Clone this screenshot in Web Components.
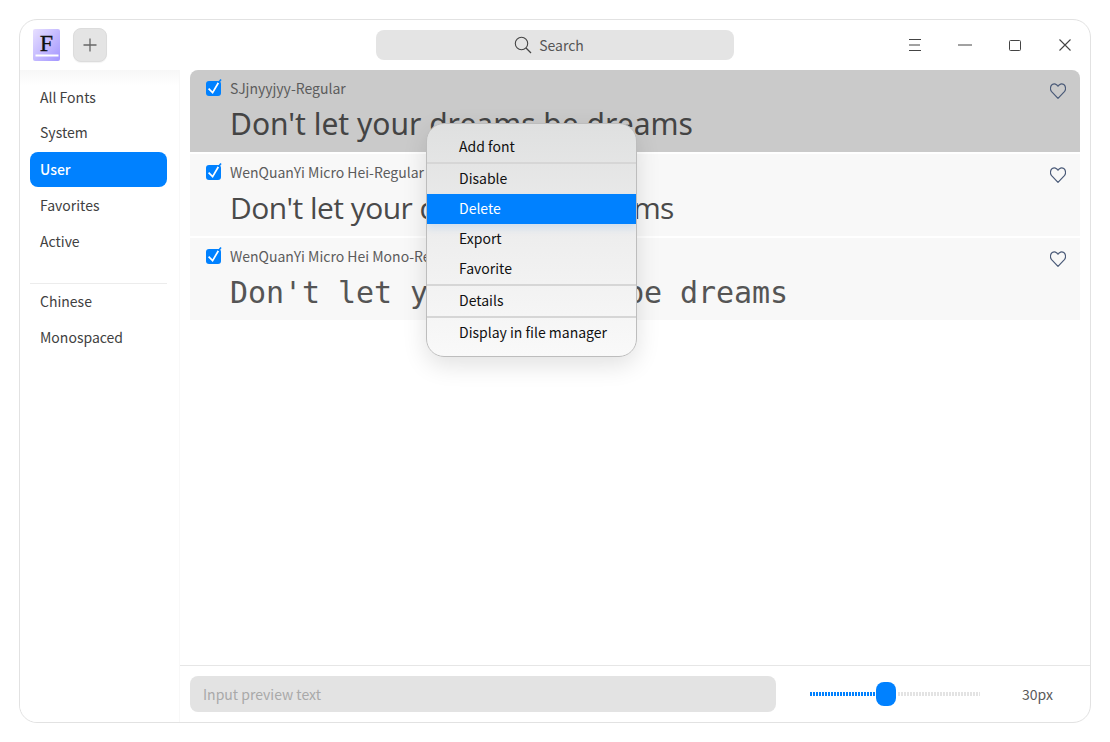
<!DOCTYPE html>
<html lang="en">
<head>
<meta charset="utf-8">
<title>Font Manager</title>
<style>
  html, body { margin: 0; height: 100%; background: #fff; }
  body { font-family: "Noto Sans CJK SC", "Noto Sans", sans-serif; font-size: 14px; }
</style>
</head>
<body>
<font-app>
  <title-bar slot="top"></title-bar>
  <side-nav slot="side">
    <nav-item>All Fonts</nav-item>
    <nav-item>System</nav-item>
    <nav-item active>User</nav-item>
    <nav-item>Favorites</nav-item>
    <nav-item>Active</nav-item>
    <nav-rule></nav-rule>
    <nav-item>Chinese</nav-item>
    <nav-item>Monospaced</nav-item>
  </side-nav>
  <font-list slot="main">
    <font-row name="SJjnyyjyy-Regular" selected face="noto">Don't let your dreams be dreams</font-row>
    <font-row name="WenQuanYi Micro Hei-Regular" face="open">Don't let your dreams be dreams</font-row>
    <font-row name="WenQuanYi Micro Hei Mono-Regular" face="mono">Don't let your dreams be dreams</font-row>
  </font-list>
  <preview-bar slot="bottom"></preview-bar>
  <context-menu slot="overlay">
    <menu-item>Add font</menu-item>
    <menu-rule></menu-rule>
    <menu-item>Disable</menu-item>
    <menu-item active>Delete</menu-item>
    <menu-item>Export</menu-item>
    <menu-item>Favorite</menu-item>
    <menu-rule></menu-rule>
    <menu-item>Details</menu-item>
    <menu-rule></menu-rule>
    <menu-item>Display in file manager</menu-item>
  </context-menu>
</font-app>

<script>
class FontApp extends HTMLElement{
    constructor(){
        super();
        this.attachShadow({ mode : "open"});
        this.shadowRoot.innerHTML = `
        <style>
            :host{
                display: block;
                box-sizing: border-box;
                height: 742px;
                padding: 19px;
            }
            .window{
                position: relative;
                box-sizing: border-box;
                height: 704px;
                border: 1px solid #e2e2e2;
                border-radius: 18px;
                background: #fff;
                display: grid;
                grid-template-columns: 160px 1fr;
                grid-template-rows: 50px 1fr 57px;
                grid-template-areas: "top top" "side main" "side bottom";
            }
            .top{ grid-area: top; }
            .side{ grid-area: side; }
            .main{ grid-area: main; }
            .bottom{ grid-area: bottom; }
            .cell{ display: block; min-width: 0; min-height: 0; }
        </style>
        <div class="window">
            <div class="cell top"><slot name="top"></slot></div>
            <div class="cell side"><slot name="side"></slot></div>
            <div class="cell main"><slot name="main"></slot></div>
            <div class="cell bottom"><slot name="bottom"></slot></div>
            <slot name="overlay"></slot>
        </div>
        `
    }
}

class TitleBar extends HTMLElement{
    constructor(){
        super();
        this.attachShadow({ mode : "open"});
        this.shadowRoot.innerHTML = `
        <style>
            :host{
                display: grid;
                grid-template-columns: 1fr 358px 1fr;
                align-items: center;
                height: 50px;
                color: #414141;
            }
            .left{ display: flex; align-items: center; padding-left: 13px; gap: 13px; }
            .logo{ width: 27px; height: 32px; display: block; }
            .add{
                box-sizing: border-box;
                width: 34px;
                height: 34px;
                border-radius: 8px;
                background: #e4e4e4;
                border: 1px solid #dcdcdc;
                box-shadow: 0 1px 1px #0000000d;
                display: flex;
                align-items: center;
                justify-content: center;
            }
            .search{
                box-sizing: border-box;
                height: 30px;
                padding-right: 12px;
                border-radius: 8px;
                background: #e4e4e4;
                display: flex;
                align-items: center;
                justify-content: center;
                gap: 7px;
                color: #555;
                font-size: 14px;
            }
            .controls{
                display: flex;
                justify-content: flex-end;
                align-items: center;
            }
            .ctl{ width: 50px; height: 50px; display: flex; align-items: center; justify-content: center; }
            svg{ display: block; }
        </style>
        <div class="left">
            <svg class="logo" viewBox="0 0 27 32">
                <defs>
                    <linearGradient id="bk" x1="0" y1="0" x2="1" y2="1">
                        <stop offset="0" stop-color="#e8e0ff"/>
                        <stop offset="1" stop-color="#a396ff"/>
                    </linearGradient>
                </defs>
                <path d="M2 0h23a2 2 0 0 1 2 2v28a2 2 0 0 1-2 2H2a2 2 0 0 1-2-2V2a2 2 0 0 1 2-2z" fill="url(#bk)"/>
                <path d="M2.5 25.5h23v2H2.5z" fill="#fff"/>
                <text x="13.5" y="22" text-anchor="middle" font-family="Liberation Serif" font-size="24" stroke="#111" stroke-width=".3" fill="#111">F</text>
            </svg>
            <div class="add">
                <svg width="14" height="14" viewBox="0 0 14 14"><path d="M7 .5v13M.5 7h13" stroke="#666" stroke-width="1.3" fill="none"/></svg>
            </div>
        </div>
        <div class="search">
            <svg width="18" height="18" viewBox="0 0 18 18"><circle cx="7.5" cy="7.5" r="6.2" stroke="#444" stroke-width="1.1" fill="none"/><path d="M12 12l5 5" stroke="#444" stroke-width="1.2"/></svg>
            <span>Search</span>
        </div>
        <div class="controls">
            <div class="ctl"><svg width="12" height="12" viewBox="0 0 12 12"><path d="M0 .5h12M0 6h11M0 11.5h12" stroke="#444" stroke-width="1" fill="none"/></svg></div>
            <div class="ctl"><svg width="14" height="2" viewBox="0 0 14 2"><path d="M0 1h14" stroke="#444" stroke-width="1"/></svg></div>
            <div class="ctl"><svg width="12" height="11" viewBox="0 0 12 11"><rect x=".5" y=".5" width="11" height="10" stroke="#444" stroke-width="1" fill="none" rx="1"/></svg></div>
            <div class="ctl"><svg width="12" height="12" viewBox="0 0 12 12"><path d="M.5.5l11 11M11.5.5l-11 11" stroke="#444" stroke-width="1.1" fill="none"/></svg></div>
        </div>
        `
    }
}

class SideNav extends HTMLElement{
    constructor(){
        super();
        this.attachShadow({ mode : "open"});
        this.shadowRoot.innerHTML = `
        <style>
            :host{
                display: block;
                box-sizing: border-box;
                height: 100%;
                padding: 10px 12px 0 10px;
                border-right: 1px solid #f8f8f8;
                background: linear-gradient(#f7f7f7, #fff 15px);
                border-bottom-left-radius: 18px;
            }
            .stack{ display: flex; flex-direction: column; gap: 1px; }
        </style>
        <div class="stack"><slot></slot></div>
        `
    }
}

class NavItem extends HTMLElement{
    constructor(){
        super();
        this.attachShadow({ mode : "open"});
        this.shadowRoot.innerHTML = `
        <style>
            :host{
                display: flex;
                align-items: center;
                box-sizing: border-box;
                height: 35px;
                padding: 0 0 2px 10px;
                border-radius: 8px;
                font-size: 14px;
                color: #414141;
            }
            :host(:nth-child(2)){ margin: -1px 0 1px; }
            :host([active]){
                background: #0081ff;
                color: #fff;
                font-weight: 500;
            }
        </style>
        <slot></slot>
        `
    }
}

class NavRule extends HTMLElement{
    constructor(){
        super();
        this.attachShadow({ mode : "open"});
        this.shadowRoot.innerHTML = `
        <style>
            :host{ display: block; height: 1px; margin: 23px 0 -1px; background: #ececec; }
        </style>
        `
    }
}

class FontList extends HTMLElement{
    constructor(){
        super();
        this.attachShadow({ mode : "open"});
        this.shadowRoot.innerHTML = `
        <style>
            :host{
                display: flex;
                flex-direction: column;
                gap: 2px;
                padding: 0 10px;
                height: 100%;
                box-sizing: border-box;
                background: #fff;
            }
        </style>
        <slot></slot>
        `
    }
}

class FontRow extends HTMLElement{
    constructor(){
        super();
        this.attachShadow({ mode : "open"});
    }

    static get styles(){
        return `
            :host{
                display: block;
                box-sizing: border-box;
                height: 82px;
                position: relative;
                background: #f8f8f8;
                padding: 8px 0 0 16px;
                color: #444;
            }
            :host([selected]){
                background: #cacaca;
                border-radius: 8px 8px 0 0;
            }
            .head{
                display: flex;
                align-items: center;
                gap: 8px;
                height: 20px;
                font-size: 14px;
                color: #5c5c5c;
            }
            .sample{
                margin: 8px 0 0 24px;
                font-size: 30px;
                line-height: 36px;
                white-space: nowrap;
            }
            .noto{ font-family: "Noto Sans", sans-serif; }
            .open{ font-family: "Open Sans", sans-serif; letter-spacing: -0.55px; color: #4a4a4a; }
            .mono{ font-family: "DejaVu Sans Mono", monospace; letter-spacing: -0.06px; color: #555; margin-top: 9px; }
            .heart{ position: absolute; right: 14px; top: 13px; display: block; }
            .check{ display: block; flex: none; align-self: flex-start; margin-top: 1px; }
        `
    }

    connectedCallback(){
        this.render();
    }

    render(){
        const text = this.textContent;
        this.shadowRoot.innerHTML = `
        <style>${FontRow.styles}</style>
        <div class="head">
            <svg class="check" width="16" height="17" viewBox="0 0 16 17">
                <rect x="0" y="2" width="15" height="15" rx="3" fill="#0081ff"/>
                <path d="M2.6 9.7l4 4 5.8-10" stroke="#fff" stroke-width="1.7" fill="none"/>
                <path d="M12.4 3.7L15 0.5" stroke="#0081ff" stroke-width="1.6" fill="none"/>
            </svg>
            <span>${this.getAttribute('name')}</span>
        </div>
        <div class="sample ${this.getAttribute('face')}">${text}</div>
        <svg class="heart" width="16" height="16" viewBox="0 0 16 16">
            <path d="M8 15.4L1.6 8.6C-.2 6.6.2 3 2.2 1.6 4.2.2 6.8 1 8 3.2 9.2 1 11.8.2 13.8 1.6 15.8 3 16.2 6.6 14.4 8.6z" fill="none" stroke="#4a5a78" stroke-width="1.2" stroke-linejoin="round"/>
        </svg>
        `
    }
}

class PreviewBar extends HTMLElement{
    constructor(){
        super();
        this.attachShadow({ mode : "open"});
        this.shadowRoot.innerHTML = `
        <style>
            :host{
                display: flex;
                align-items: center;
                box-sizing: border-box;
                height: 57px;
                border-top: 1px solid #e6e6e6;
                padding-left: 10px;
                font-size: 14px;
            }
            .input{
                width: 586px;
                height: 36px;
                box-sizing: border-box;
                padding-left: 13px;
                display: flex;
                align-items: center;
                border-radius: 8px;
                background: #e3e3e3;
                color: #a9a9a9;
                flex: none;
            }
            .slider{
                position: relative;
                width: 170px;
                height: 24px;
                margin-left: 34px;
                flex: none;
            }
            .track{
                position: absolute;
                top: 10px;
                height: 4px;
                background: repeating-linear-gradient(90deg, var(--c) 0 2px, transparent 2px 3px);
            }
            .on{ left: 0; width: 66px; --c: #0081ff; }
            .off{ left: 88px; right: 0; --c: #e3e3e3; }
            .thumb{
                position: absolute;
                left: 66px;
                top: 0;
                width: 20px;
                height: 24px;
                border-radius: 8px;
                background: #0081ff;
            }
            .size{ margin-left: 42px; color: #5a5a5a; }
        </style>
        <div class="input">Input preview text</div>
        <div class="slider">
            <div class="track on"></div>
            <div class="track off"></div>
            <div class="thumb"></div>
        </div>
        <div class="size">30px</div>
        `
    }
}

class ContextMenu extends HTMLElement{
    constructor(){
        super();
        this.attachShadow({ mode : "open"});
        this.shadowRoot.innerHTML = `
        <style>
            :host{
                position: absolute;
                left: 406px;
                top: 103px;
                width: 211px;
                height: 234px;
                box-sizing: border-box;
                border: 1px solid #bdbdbd;
                border-radius: 18px;
                overflow: hidden;
                display: flex;
                flex-direction: column;
                background: linear-gradient(#dfe0e0, #eeeeee 50%, #f9f9f9);
                box-shadow: 0 8px 24px #0000001f;
            }
        </style>
        <slot></slot>
        `
    }
}

class MenuItem extends HTMLElement{
    constructor(){
        super();
        this.attachShadow({ mode : "open"});
        this.shadowRoot.innerHTML = `
        <style>
            :host{
                display: flex;
                align-items: center;
                box-sizing: border-box;
                height: 30px;
                padding: 0 0 2px 32px;
                font-size: 14px;
                color: #111;
                flex: none;
            }
            :host(:first-child){ height: 38px; padding: 5px 0 0 32px; }
            :host([active]){
                background: #0081ff;
                color: #fff;
                box-shadow: 0 4px 8px #0081ff22;
            }
        </style>
        <slot></slot>
        `
    }
}

class MenuRule extends HTMLElement{
    constructor(){
        super();
        this.attachShadow({ mode : "open"});
        this.shadowRoot.innerHTML = `
        <style>
            :host{ display: block; height: 2px; background: #d6d6d6; flex: none; }
        </style>
        `
    }
}

customElements.define("font-app", FontApp)
customElements.define("title-bar", TitleBar)
customElements.define("side-nav", SideNav)
customElements.define("nav-item", NavItem)
customElements.define("nav-rule", NavRule)
customElements.define("font-list", FontList)
customElements.define("font-row", FontRow)
customElements.define("preview-bar", PreviewBar)
customElements.define("context-menu", ContextMenu)
customElements.define("menu-item", MenuItem)
customElements.define("menu-rule", MenuRule)
</script>
</body>
</html>
